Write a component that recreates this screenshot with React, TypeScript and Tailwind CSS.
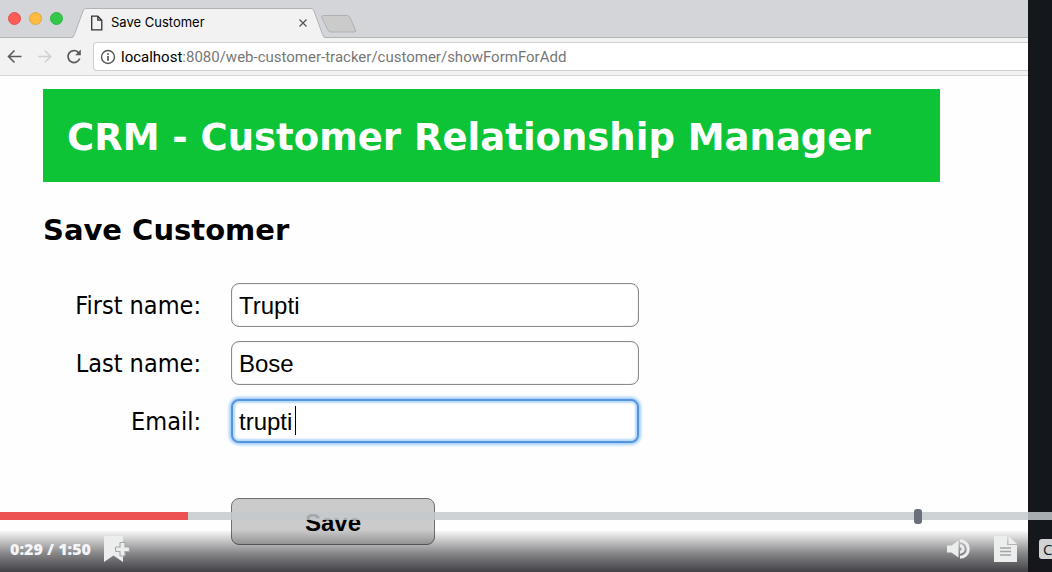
import React from "react";

type Field = { id: string; label: string; value: string; focused?: boolean };

const fields: Field[] = [
  { id: "firstName", label: "First name:", value: "Trupti" },
  { id: "lastName", label: "Last name:", value: "Bose" },
  { id: "email", label: "Email:", value: "trupti", focused: true },
];

function TabStrip() {
  return (
    <div className="flex h-[38px] items-end border-b border-[#b3b4b6] bg-[#d3d5d8]">
      <div className="flex h-full w-[72px] shrink-0 items-center gap-2 pl-2">
        <span className="size-[13px] rounded-full border border-[#e2504c] bg-[#fc5b57]" />
        <span className="size-[13px] rounded-full border border-[#e2a73b] bg-[#fdbc40]" />
        <span className="size-[13px] rounded-full border border-[#2db742] bg-[#34c84a]" />
      </div>
      <div className="-mb-px flex h-[30px] items-stretch">
        <svg className="w-[14px]" viewBox="0 0 14 30" fill="none">
          <path d="M0 30C1.500 29 2 27.500 3 25L11 3C12 1 12.500 .5 14 .5V30Z" fill="#f2f2f2" />
          <path d="M0 29.500C1.500 29 2 27.500 3 25L11 3C12 1 12.500 .5 14 .5" stroke="#b0b2b5" />
        </svg>
        <div className="flex w-[225px] items-center border-t border-[#b0b2b5] bg-[#f2f2f2] pb-px pl-1">
          <svg className="size-4 shrink-0" viewBox="0 0 16 16" fill="none" stroke="#333" strokeWidth="1.300">
            <path d="M1.700 1.200H7.800L11.800 5.200V14.800H1.700ZM7.800 1.200V5.200H11.800" />
          </svg>
          <span className="ml-[5px] font-[Inter,sans-serif] text-[13px] text-black">Save Customer</span>
          <button aria-label="Close tab" className="ml-auto p-1">
            <svg className="size-2" viewBox="0 0 8 8" stroke="#555" strokeWidth="1.300">
              <path d="M.5 .5L7.500 7.500M7.500 .5L.5 7.500" />
            </svg>
          </button>
        </div>
        <svg className="w-[14px]" viewBox="0 0 14 30" fill="none">
          <path d="M14 30C12.500 29 12 27.500 11 25L3 3C2 1 1.500 .5 0 .5V30Z" fill="#f2f2f2" />
          <path d="M14 29.500C12.500 29 12 27.500 11 25L3 3C2 1 1.500 .5 0 .5" stroke="#b0b2b5" />
        </svg>
      </div>
      <button aria-label="New tab" className="-ml-1 mb-1">
        <svg className="h-[18px] w-9" viewBox="0 0 36 18">
          <path d="M2.500 .5H26Q28 .5 29 2.500L34.500 15Q35.500 17 33 17H10Q8 17 7 15L.8 2.500Q0 .5 2.500 .5Z" fill="#cbcbcb" stroke="#aeb0b2" />
        </svg>
      </button>
    </div>
  );
}

function AddressBar() {
  return (
    <div className="flex h-[38px] items-center border-b border-[#d6d6d6] bg-[#f2f2f2] pl-[7px]">
      <button aria-label="Back">
        <svg className="size-4" viewBox="0 0 16 16" fill="none" stroke="#5a5a5a" strokeWidth="1.600">
          <path d="M14.500 7.500H1.800M7.500 1.500L1.500 7.500L7.500 13.500" />
        </svg>
      </button>
      <button aria-label="Forward" className="ml-[14px]">
        <svg className="size-4" viewBox="0 0 16 16" fill="none" stroke="#d0d0d0" strokeWidth="1.600">
          <path d="M1 7.500H13.400M7.700 1.500L13.700 7.500L7.700 13.500" />
        </svg>
      </button>
      <button aria-label="Reload" className="ml-[13px]">
        <svg className="size-4" viewBox="0 0 16 16" fill="none" stroke="#5a5a5a" strokeWidth="1.700">
          <path d="M13.700 9.500A6 6 0 1 1 12.400 3.400L13.500 4.500" />
          <path d="M14.800 .5V6.200H9.200Z" fill="#5a5a5a" stroke="none" />
        </svg>
      </button>
      <div className="ml-[11px] flex h-[29px] flex-1 items-center rounded-l-[4px] border border-r-0 border-[#cfcfcf] bg-white pl-[6px]">
        <svg className="size-4" viewBox="0 0 16 16" fill="none" stroke="#555" strokeWidth="1.400">
          <circle cx="8" cy="8" r="6.500" />
          <path d="M8 7V11.800M8 4.200V5.800" strokeWidth="1.700" />
        </svg>
        <span className="ml-[5px] pt-px font-[Roboto,sans-serif] text-[15px] text-[#777]">
          <span className="text-black">localhost</span>:8080/web-customer-tracker/customer/showFormForAdd
        </span>
      </div>
    </div>
  );
}

function CustomerForm() {
  return (
    <main className="flex-1 bg-[#fefefe] pt-[13px] pr-[88px] pb-[27px] pl-[43px]">
      <header className="flex h-[93px] items-center bg-[#0cc436] pt-1 pl-6">
        <h1 className="font-['DejaVu_Sans',sans-serif] text-[37px] font-bold whitespace-nowrap text-white">
          CRM - Customer Relationship Manager
        </h1>
      </header>
      <h2 className="mt-7 font-['DejaVu_Sans',sans-serif] text-[29px] leading-10 font-bold text-black">
        Save Customer
      </h2>
      <form className="mt-[33px]" onSubmit={(e) => e.preventDefault()}>
        <div className="flex flex-col gap-[14px]">
          {fields.map((f) => (
            <div key={f.id} className="flex h-11 items-center">
              <label
                htmlFor={f.id}
                className="w-[158px] pt-[2px] text-right font-['DejaVu_Sans_Condensed','DejaVu_Sans',sans-serif] text-[25px] whitespace-nowrap text-black"
              >
                {f.label}
              </label>
              <div className="relative ml-[30px] h-11 w-[408px]">
                <input
                  id={f.id}
                  type="text"
                  defaultValue={f.value}
                  className={
                    "h-full w-full rounded-[8px] bg-white font-['Liberation_Sans',sans-serif] text-[24px] text-black outline-none " +
                    (f.focused
                      ? "border-2 border-[#5595df] px-[6px] pt-px shadow-[0_0_3px_2px_#9fcdfb,inset_0_0_2px_2px_#b5d9fc]"
                      : "border border-[#8a8a8a] px-[7px] pt-px shadow-[inset_0_0_1px_#999]")
                  }
                />
                {f.focused && <span className="absolute top-[7px] left-[64px] h-[29px] w-px bg-black" />}
              </div>
            </div>
          ))}
        </div>
        <button
          type="submit"
          className="mt-[55px] ml-[188px] h-[47px] w-[204px] rounded-[8px] border border-[#707070] bg-[#cbcbcb] pt-[2px] font-['Liberation_Sans',sans-serif] text-[24px] font-bold text-black"
        >
          Save
        </button>
      </form>
    </main>
  );
}

function PlayerControls() {
  return (
    <div className="absolute inset-x-0 bottom-0">
      <input
        type="range"
        aria-label="Seek"
        min={0}
        max={1000}
        defaultValue={875}
        className="block h-4 w-full appearance-none bg-transparent [&::-webkit-slider-runnable-track]:h-2 [&::-webkit-slider-runnable-track]:bg-[linear-gradient(to_right,#ec5252_17.9%,#c4c9cdd6_17.9%)] [&::-webkit-slider-thumb]:-mt-[3px] [&::-webkit-slider-thumb]:h-[15px] [&::-webkit-slider-thumb]:w-2 [&::-webkit-slider-thumb]:appearance-none [&::-webkit-slider-thumb]:rounded-[3px] [&::-webkit-slider-thumb]:bg-[#686f7a]"
      />
      <div className="flex h-12 items-center bg-[linear-gradient(to_top,#16161cd0,#16161c80_40%,#16161c00_88%)] pt-px pl-[10px] text-[#f4f5f6]">
        <span className="font-['Open_Sans',sans-serif] text-[16px] font-extrabold">0:29 / 1:50</span>
        <button aria-label="Add bookmark" className="ml-3">
          <svg className="h-[26px] w-7" viewBox="0 0 28 26" fill="#eceded">
            <path d="M1 0H20V26L10.500 19.500L1 26Z" />
            <path
              d="M17.800 6.500H21.200Q22 6.500 22 7.300V11H25.500Q26.500 11 26.500 12V14.500Q26.500 15.500 25.500 15.500H22V19.200Q22 20 21.200 20H17.800Q17 20 17 19.200V15.500H13.500Q12.500 15.500 12.500 14.500V12Q12.500 11 13.500 11H17V7.300Q17 6.500 17.800 6.500Z"
              stroke="#a6a7a9"
              strokeWidth="1.200"
            />
          </svg>
        </button>
        <button aria-label="Volume" className="ml-auto">
          <svg className="h-[22px] w-[25px]" viewBox="0 0 25 22" fill="#eceded">
            <path d="M0 7.500H4.500L11.500 2.500V19.500L4.500 14.500H0Z" />
            <path d="M13 7.800A3.200 3.200 0 0 1 13 14.200M13 2.700A8.300 8.300 0 0 1 13 19.300" fill="none" stroke="#eceded" strokeWidth="3" />
          </svg>
        </button>
        <button aria-label="Transcript" className="ml-[22px]">
          <svg className="h-[26px] w-[23px]" viewBox="0 0 23 26" fill="#eceded">
            <path d="M0 0H13V9H23V26H0ZM14.500 0L23 8H14.500Z" />
            <path d="M6 12H17M6 15.500H17M6 19H17" stroke="#a3a4a6" strokeWidth="1.300" />
          </svg>
        </button>
        <div className="ml-[22px] w-[13px] overflow-hidden">
          <button className="block h-5 w-7 rounded-[3px] bg-[#d1d2d3] pl-1 text-left font-['Open_Sans',sans-serif] text-[15px] leading-5 text-[#14171c]">
            C
          </button>
        </div>
      </div>
    </div>
  );
}

export default function App() {
  return (
    <div className="relative flex min-h-screen overflow-hidden bg-[#14181d]">
      <div className="mr-6 flex min-w-0 flex-1 flex-col">
        <TabStrip />
        <AddressBar />
        <CustomerForm />
      </div>
      <PlayerControls />
    </div>
  );
}
